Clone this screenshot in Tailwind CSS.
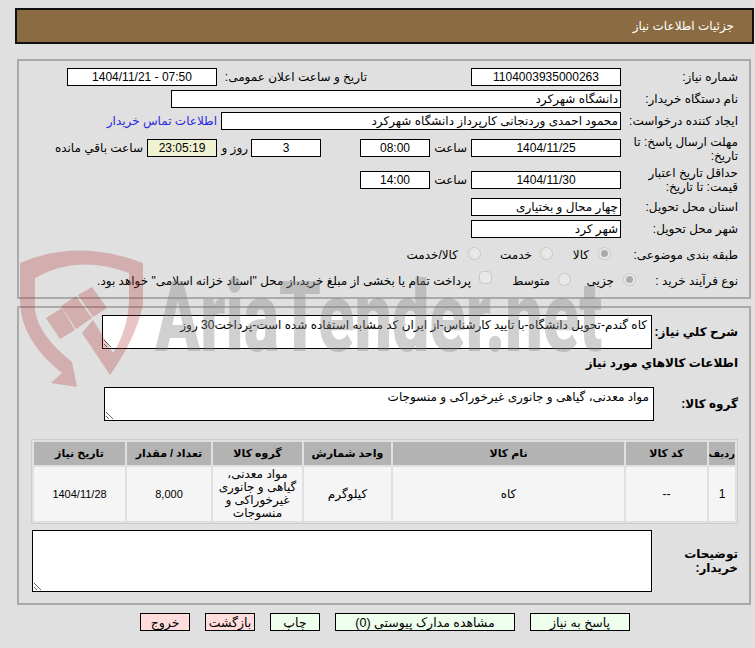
<!DOCTYPE html>
<html lang="fa" dir="rtl">
<head>
    <meta charset="UTF-8">
    <title>جزئیات اطلاعات نیاز</title>
    <script src="https://cdn.jsdelivr.net/npm/@tailwindcss/browser@4"></script>
</head>
<body class="bg-[#e0e0e0] text-[12px] text-black font-['Liberation_Sans','DejaVu_Sans',sans-serif]">
<div class="relative h-[648px] w-[755px] overflow-hidden pt-2 pr-px pl-[15px]">

    <div class="flex h-9 items-center border-2 border-[#111] bg-[#8b6b41] pr-[18px] text-[12px] text-white">جزئیات اطلاعات نیاز</div>

    <!-- panel 1 -->
    <div class="mt-[15px] mr-[3px] ml-0.5 h-[240px] border-2 border-[#aaa] pt-[7px] pr-[11px]">
        <div class="flex h-[18px] items-center">
            <div class="w-[117px] shrink-0">شماره نیاز:</div>
            <div class="flex h-[18px] w-[150px] items-center justify-center border border-black bg-white">1104003935000263</div>
            <div class="mr-[104px] w-[150px] shrink-0">تاریخ و ساعت اعلان عمومی:</div>
            <div class="flex h-[18px] w-[150px] items-center justify-center border border-black bg-white" dir="ltr">1404/11/21 - 07:50</div>
        </div>
        <div class="mt-1 flex h-[18px] items-center">
            <div class="w-[117px] shrink-0">نام دستگاه خریدار:</div>
            <div class="flex h-[18px] w-[450px] items-center border border-black bg-white pr-0.5">دانشگاه شهرکرد</div>
        </div>
        <div class="mt-1 flex h-[18px] items-center">
            <div class="w-[117px] shrink-0">ایجاد کننده درخواست:</div>
            <div class="flex h-[18px] w-[400px] items-center border border-black bg-white pr-0.5">محمود احمدی وردنجانی کارپرداز دانشگاه شهرکرد</div>
            <a class="mr-1 text-[#2a2ae0]">اطلاعات تماس خریدار</a>
        </div>
        <div class="mt-[9px] flex h-[18px] items-center">
            <div class="w-[117px] shrink-0 pt-0.5 leading-[14px]">مهلت ارسال پاسخ: تا تاریخ:</div>
            <div class="flex h-[18px] w-[150px] shrink-0 items-center justify-center border border-black bg-white">1404/11/25</div>
            <div class="mr-1 w-[37px]">ساعت</div>
            <div class="flex h-[18px] w-[70px] items-center justify-center border border-black bg-white">08:00</div>
            <div class="mr-[39px] flex h-[18px] w-[70px] items-center justify-center border border-black bg-white">3</div>
            <div class="mr-[3px] w-[31px]">روز و</div>
            <div class="flex h-[18px] w-[70px] items-center justify-center border border-black bg-[#f0f0d2]">23:05:19</div>
            <div class="mr-1">ساعت باقي مانده</div>
        </div>
        <div class="mt-3.5 flex h-[18px] items-center">
            <div class="w-[117px] shrink-0 leading-[14px]">حداقل تاریخ اعتبار قیمت: تا تاریخ:</div>
            <div class="flex h-[18px] w-[150px] shrink-0 items-center justify-center border border-black bg-white">1404/11/30</div>
            <div class="mr-1 w-[37px]">ساعت</div>
            <div class="flex h-[18px] w-[70px] items-center justify-center border border-black bg-white">14:00</div>
        </div>
        <div class="mt-[9px] flex h-[18px] items-center">
            <div class="w-[117px] shrink-0">استان محل تحویل:</div>
            <div class="flex h-[18px] w-[150px] items-center border border-black bg-white pr-0.5">چهار محال و بختیاری</div>
        </div>
        <div class="mt-1 flex h-[18px] items-center">
            <div class="w-[117px] shrink-0">شهر محل تحویل:</div>
            <div class="flex h-[18px] w-[150px] items-center border border-black bg-white pr-0.5">شهر کرد</div>
        </div>
        <div class="mt-2 flex h-[18px] items-center">
            <div class="w-[127px] shrink-0">طبقه بندی موضوعی:</div>
            <span class="mb-1 flex size-[13px] items-center justify-center rounded-full border border-[#c8c8c8] bg-[#e8e8e8]"><span class="size-[7px] rounded-full bg-[#aaa]"></span></span>
            <div class="mr-[9px] w-9">کالا</div>
            <span class="mb-1 size-[13px] rounded-full border border-[#c8c8c8] bg-[#e8e8e8]"></span>
            <div class="mr-2 w-[51px]">خدمت</div>
            <span class="mb-1 size-[13px] rounded-full border border-[#c8c8c8] bg-[#e8e8e8]"></span>
            <div class="mr-2.5">کالا/خدمت</div>
        </div>
        <div class="mt-2 flex h-[18px] items-center">
            <div class="w-[102px] shrink-0">نوع فرآیند خرید :</div>
            <span class="mb-1 flex size-[13px] items-center justify-center rounded-full border border-[#c8c8c8] bg-[#e8e8e8]"><span class="size-[7px] rounded-full bg-[#aaa]"></span></span>
            <div class="mr-[9px] w-[43px]">جزیی</div>
            <span class="mb-1 size-[13px] rounded-full border border-[#c8c8c8] bg-[#e8e8e8]"></span>
            <div class="mr-2 w-[58px]">متوسط</div>
            <span class="mb-2 size-[13px] rounded-sm border border-[#c8c8c8] bg-[#e8e8e8]"></span>
            <div class="mr-2 whitespace-nowrap">پرداخت تمام یا بخشی از مبلغ خرید،از محل "اسناد خزانه اسلامی" خواهد بود.</div>
        </div>
    </div>

    <!-- panel 2 -->
    <div class="mt-[7px] mr-[3px] ml-0.5 h-[299px] border-2 border-[#aaa] pt-[7px] pr-[11px] pl-3">
        <div class="flex h-[34px] items-center">
            <div class="w-[86px] shrink-0 font-bold">شرح کلي نیاز:</div>
            <textarea readonly class="h-[34px] w-[550px] border border-black bg-white px-1 text-[12px]">کاه گندم-تحویل دانشگاه-با تایید کارشناس-از ایران کد مشابه استفاده شده است-پرداخت30 روز</textarea>
        </div>
        <div class="mt-1 h-5 leading-5 font-bold">اطلاعات کالاهاي مورد نیاز</div>
        <div class="mt-3.5 flex h-[34px] items-center">
            <div class="w-[84px] shrink-0 font-bold">گروه کالا:</div>
            <textarea readonly class="h-[34px] w-[550px] border border-black bg-white px-1 text-[12px]">مواد معدنی، گیاهی و جانوری غیرخوراکی و منسوجات</textarea>
        </div>
        <table class="mt-[18px] w-[707px] table-fixed border-separate border-spacing-0.5 border border-[#ccc] text-center text-[12px]">
            <thead>
                <tr class="h-[23px] bg-[#b3b3b3] text-[11px]">
                    <th class="w-[26px] text-[10px] font-bold">ردیف</th>
                    <th class="w-[81px] font-bold">کد کالا</th>
                    <th class="w-[231px] font-bold">نام کالا</th>
                    <th class="w-[87px] font-bold">واحد شمارش</th>
                    <th class="w-[89px] font-bold">گروه کالا</th>
                    <th class="w-[84px] font-bold">تعداد / مقدار</th>
                    <th class="font-bold">تاریخ نیاز</th>
                </tr>
            </thead>
            <tbody>
                <tr class="h-[54px] bg-[#f5f5f5]">
                    <td>1</td>
                    <td>--</td>
                    <td>کاه</td>
                    <td>کیلوگرم</td>
                    <td class="leading-[13px]">مواد معدنی، گیاهی و جانوری غیرخوراکی و منسوجات</td>
                    <td class="text-[11px]">8,000</td>
                    <td class="text-[11px]">1404/11/28</td>
                </tr>
            </tbody>
        </table>
        <div class="mt-1.5 flex h-[62px] items-center">
            <div class="w-[86px] shrink-0 leading-[14px] font-bold">توضیحات خریدار:</div>
            <textarea readonly class="h-[62px] w-[620px] border border-black bg-white"></textarea>
        </div>
    </div>

    <!-- buttons -->
    <div class="mt-2 mr-[124px] flex h-[18px] gap-[15px] text-[12.5px]">
        <button class="w-[100px] border border-black bg-[#eeffee]">پاسخ به نیاز</button>
        <button class="w-[180px] border border-black bg-[#eeffee]">مشاهده مدارک پیوستی (0)</button>
        <button class="w-[50px] border border-black bg-[#eeffee]">چاپ</button>
        <button class="w-[50px] border border-black bg-[#ffdddd]">بازگشت</button>
        <button class="w-[50px] border border-black bg-[#ffdddd]">خروج</button>
    </div>

    <!-- watermark -->
    <svg class="pointer-events-none absolute top-0 left-0" width="755" height="648">
        <g fill="#b02a2a" opacity="0.27">
            <path d="M20 263 Q77 238 143 263 L143 305 Q135 340 110 375 L82 333 L93 320 L113 353 Q128 330 129 300 L129 273 Q77 254 35 278 L35 310 Q38 335 72 362 L77 387 L51 383 L62 373 Q20 340 20 300 Z"/>
            <path d="M46 318 L62 308 L75 330 L60 339 Z"/>
            <path d="M61 306 L76 296 L92 318 L76 329 Z"/>
            <path d="M78 295 L92 287 L107 308 L93 317 Z"/>
        </g>
        <text x="155" y="351" direction="ltr" text-anchor="start" textLength="447" lengthAdjust="spacingAndGlyphs" font-family="Roboto" font-weight="900" font-size="98" fill="#808080" opacity="0.36">AriaTender.net</text>
    </svg>
</div>
</body>
</html>
